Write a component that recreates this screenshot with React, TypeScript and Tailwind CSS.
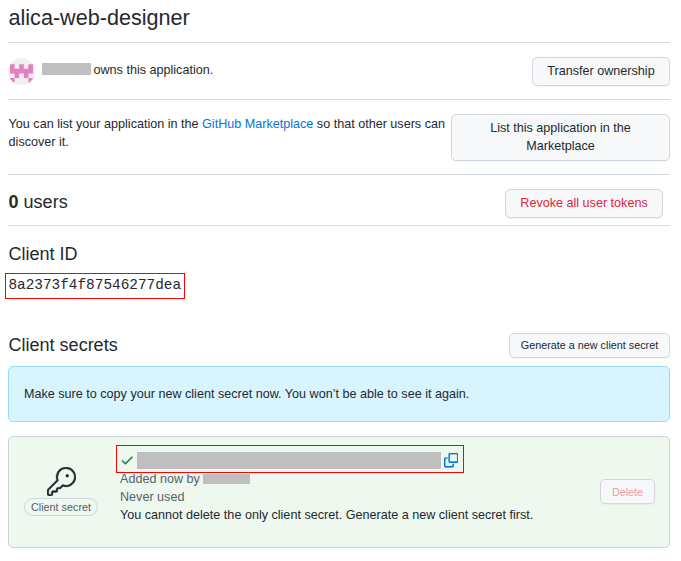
import React from "react";
import { GoKey } from "react-icons/go";

const button =
  "flex items-center justify-center rounded-[5px] border border-[#d3d7db] bg-[#f6f8fa] text-center shadow-[0_1px_0_rgba(27,31,36,0.04)]";

function Identicon() {
  return (
    <svg viewBox="0 0 27 27" className="h-[27px] w-[27px] shrink-0">
      <defs>
        <clipPath id="avatar">
          <circle cx="13.5" cy="13.5" r="13.5" />
        </clipPath>
      </defs>
      <g clipPath="url(#avatar)">
        <rect width="27" height="27" fill="#f0f0f0" />
        <path
          fill="#e57fc4"
          d="M2 6.2h4.6v4.6h4.6v-4.6h4.6v4.6h4.6v-4.6h4.6v9.2h-4.6v4.6h-4.6v-4.6h-4.6v4.6h-4.6v-4.6H2zM2 20h4.6v4.6H2zM20.4 20h4.6v4.6h-4.6z"
        />
      </g>
    </svg>
  );
}

function CheckIcon() {
  return (
    <svg viewBox="0 0 16 16" className="h-[14.4px] w-[14.4px] shrink-0 fill-[#1a8242] stroke-[#1a8242] stroke-[0.3]">
      <path d="M13.78 4.22a.75.75 0 0 1 0 1.06l-7.25 7.25a.75.75 0 0 1-1.06 0L2.22 9.28a.751.751 0 0 1 .018-1.042.751.751 0 0 1 1.042-.018L6 10.94l6.72-6.72a.75.75 0 0 1 1.06 0Z" />
    </svg>
  );
}

function CopyIcon() {
  return (
    <svg viewBox="0 0 16 16" className="block h-[14.4px] w-[14.4px] shrink-0 fill-[#0574d8] stroke-[#0574d8] stroke-[0.2]">
      <path d="M0 6.75C0 5.784.784 5 1.75 5h1.5a.75.75 0 0 1 0 1.5h-1.5a.25.25 0 0 0-.25.25v7.5c0 .138.112.25.25.25h7.5a.25.25 0 0 0 .25-.25v-1.5a.75.75 0 0 1 1.5 0v1.5A1.75 1.75 0 0 1 9.25 16h-7.5A1.75 1.75 0 0 1 0 14.25Z" />
      <path d="M5 1.75C5 .784 5.784 0 6.75 0h7.5C15.216 0 16 .784 16 1.75v7.5A1.75 1.75 0 0 1 14.25 11h-7.5A1.75 1.75 0 0 1 5 9.25Zm1.75-.25a.25.25 0 0 0-.25.25v7.5c0 .138.112.25.25.25h7.5a.25.25 0 0 0 .25-.25v-7.5a.25.25 0 0 0-.25-.25Z" />
    </svg>
  );
}

export default function App() {
  return (
    <main className="h-[561px] w-[681px] overflow-hidden bg-white pr-[11px] pl-2 font-['Liberation_Sans',Arial,sans-serif] text-[12.6px] leading-[18px] text-[#24292f]">
      <header className="h-[43px] border-b border-[#d3dae1] pt-1 pl-[0.5px]">
        <h1 className="text-[21.6px] leading-7">alica-web-designer</h1>
      </header>

      <section className="flex h-[57px] items-center border-b border-[#d3dae1]">
        <Identicon />
        <span className="ml-[7px] h-3 w-[49px] -translate-y-[2px] bg-[#bfbfbf]" />
        <p className="ml-[2.5px] -translate-y-px">owns this application.</p>
        <button className={`${button} ml-auto h-[29px] w-[138px]`}>Transfer ownership</button>
      </section>

      <section className="flex h-[75px] items-start justify-between border-b border-[#ccd7e0] pt-3.5">
        <p className="mt-px w-[441px] pl-[0.6px]">
          You can list your application in the <a className="text-[#0574d8]">GitHub Marketplace</a> so that other users can discover it.
        </p>
        <button className={`${button} h-[47px] w-[219px] px-8 pb-[2px]`}>List this application in the Marketplace</button>
      </section>

      <section className="flex h-[51px] items-start justify-between border-b border-[#d8dee4] pt-3.5 pr-[7px]">
        <h2 className="pl-[0.6px] text-[18px] leading-[27px]">
          <strong>0</strong> users
        </h2>
        <button className={`${button} h-[29px] w-[158px] pb-[2px] text-[#dc2638]`}>Revoke all user tokens</button>
      </section>

      <section className="h-[107px] pt-[15px]">
        <h2 className="pl-[0.6px] text-[18px] leading-[27px]">Client ID</h2>
        <code className="mt-[5px] -ml-[3px] flex h-[26px] w-[180px] items-center border border-[#ff0000] pb-0.5 pl-[2.4px] font-['Liberation_Mono',monospace] text-[14.4px] leading-5">
          8a2373f4f87546277dea
        </code>
      </section>

      <section>
        <div className="flex h-[33px] items-start justify-between">
          <h2 className="-mt-px pl-[0.6px] text-[18px] leading-[27px]">Client secrets</h2>
          <button className={`${button} h-[25px] w-[161px] pb-[2px] text-[10.8px]`}>Generate a new client secret</button>
        </div>

        <div className="flex h-14 items-center rounded-[5px] border border-[#9bd9fd] bg-[#d8f4ff] px-[15px]">
          Make sure to copy your new client secret now. You won’t be able to see it again.
        </div>

        <div className="mt-3.5 flex h-28 rounded-[5px] border border-[#c9d4d4] bg-[#eef8ee]">
          <div className="flex w-[104px] flex-col items-center pt-[30px]">
            <GoKey className="h-[29px] w-[29px] stroke-current stroke-[0.25]" />
            <span className="mt-[2px] flex h-[18px] w-[74px] items-center justify-center rounded-full border border-[#ccd6de] text-[10.8px] text-[#57606a]">
              Client secret
            </span>
          </div>
          <div className="pt-2">
            <div className="ml-[3px] flex h-[28px] w-[348px] items-center border border-[#ff0000] pt-[3px] pl-[3px]">
              <CheckIcon />
              <span className="ml-[2.6px] h-[17px] w-[304px] bg-[#bfbfbf]" />
              <span className="ml-[3px]">
                <CopyIcon />
              </span>
            </div>
            <div className="-mt-[3px] pl-[7px]">
              <p className="flex items-center text-[#57606a]">
                Added now by <span className="ml-[3px] h-2.5 w-[47px] bg-[#bfbfbf]" />
              </p>
              <p className="text-[#57606a]">Never used</p>
              <p>You cannot delete the only client secret. Generate a new client secret first.</p>
            </div>
          </div>
          <button disabled className={`${button} mt-[42px] mr-3.5 ml-auto h-[25px] w-[55px] text-[10.8px] text-[#ed9aa2]`}>
            Delete
          </button>
        </div>
      </section>
    </main>
  );
}
